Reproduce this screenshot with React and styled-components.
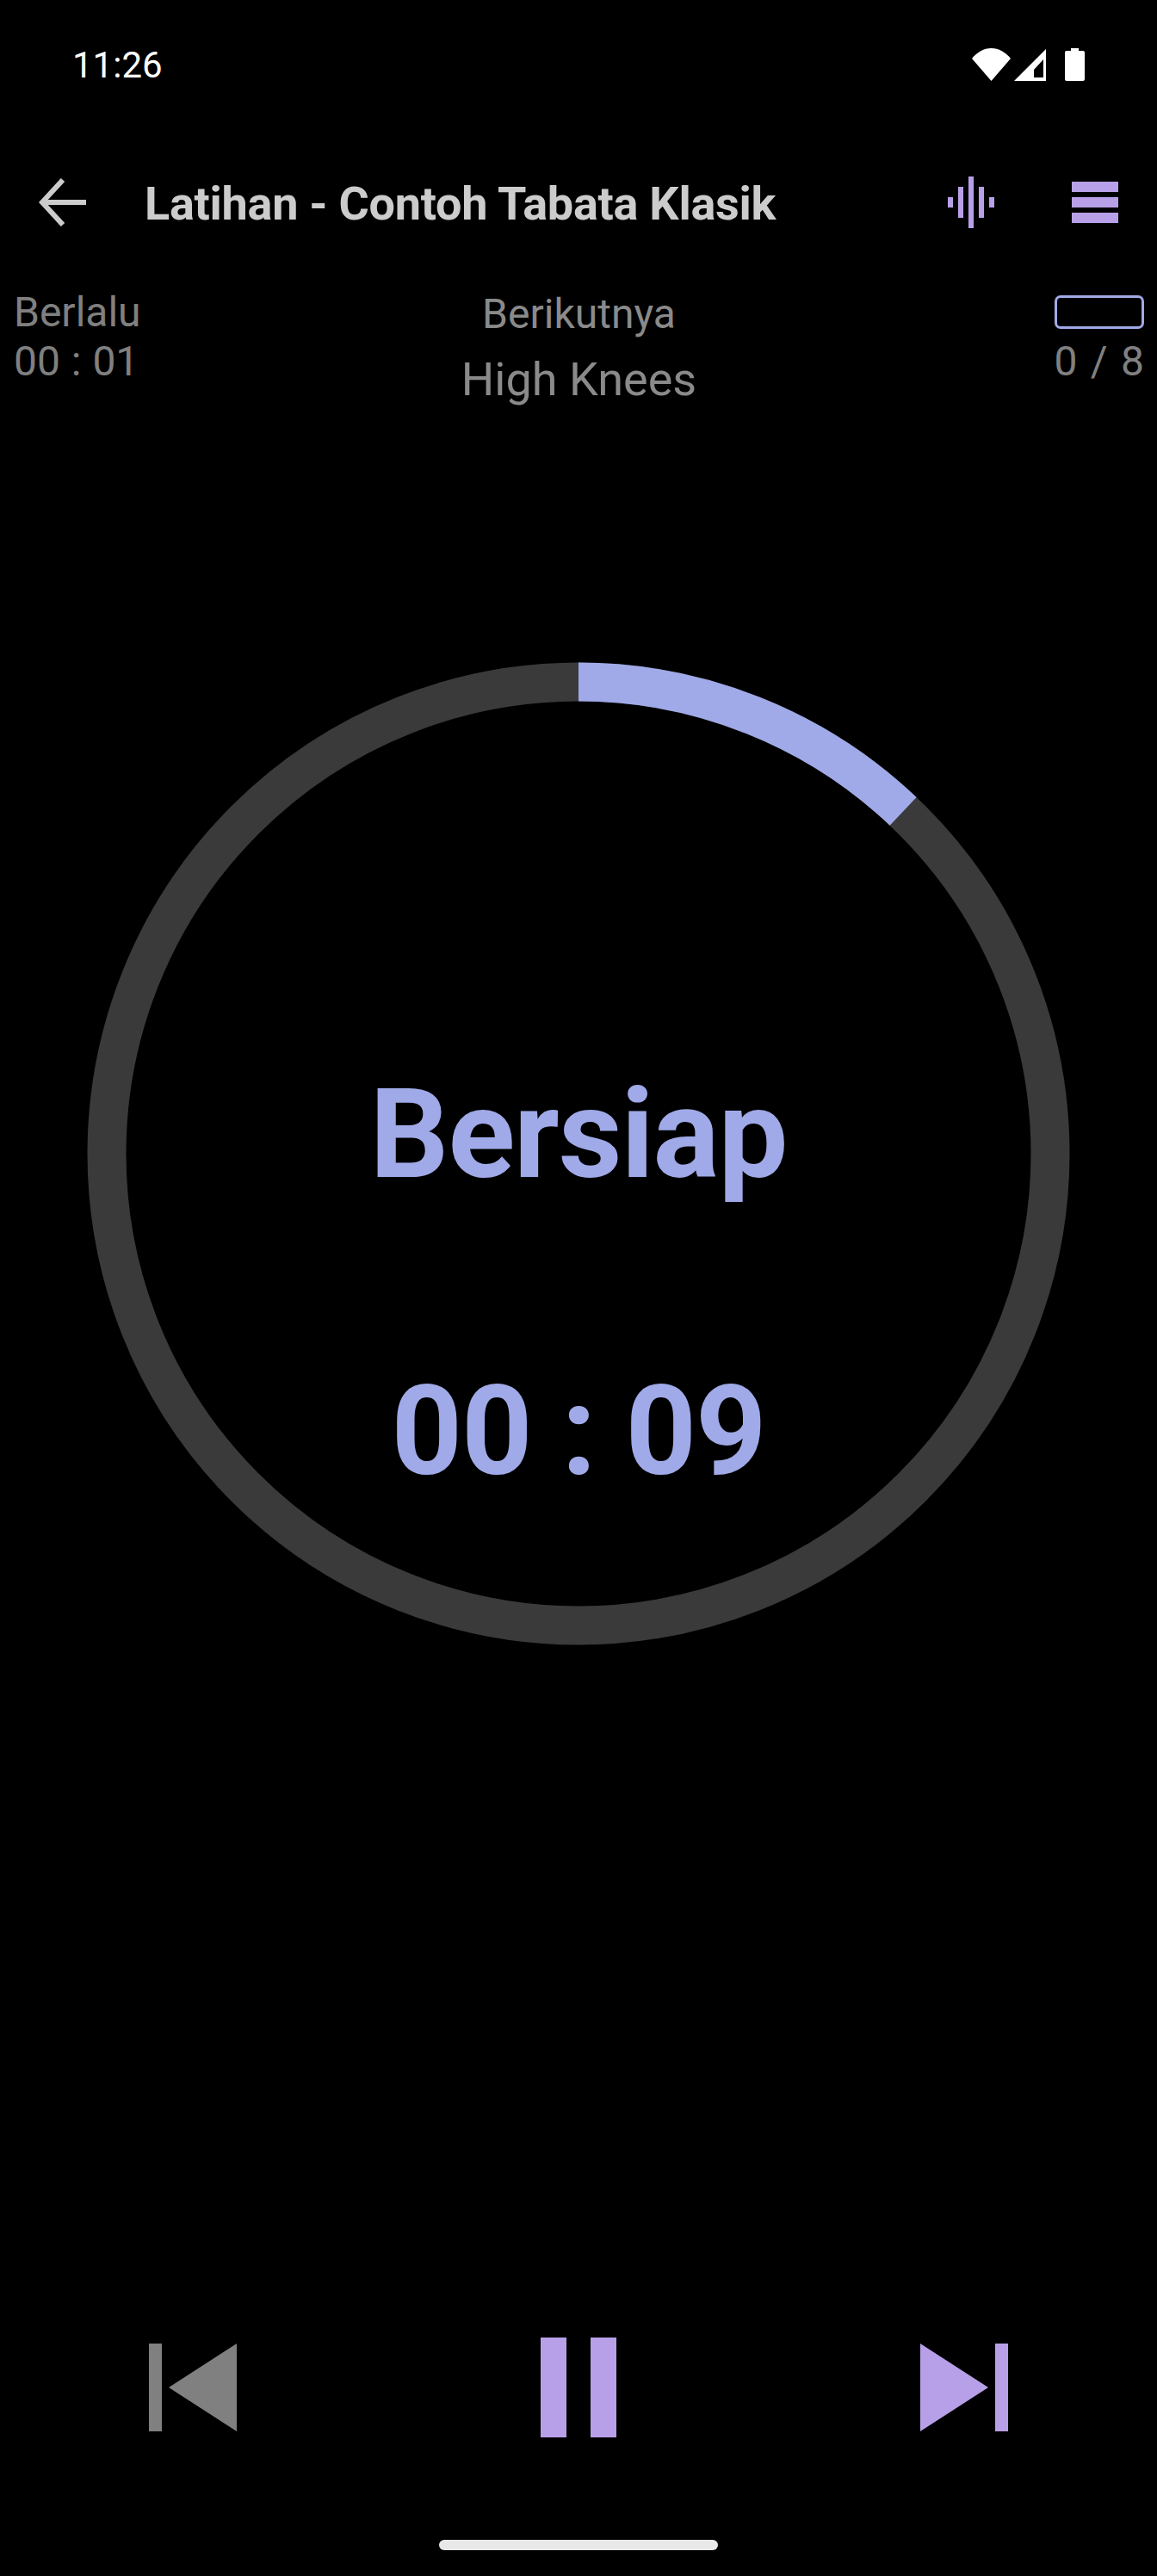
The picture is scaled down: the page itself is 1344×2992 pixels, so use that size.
import React from 'react'
import styled, { createGlobalStyle } from 'styled-components'

const indigo = '#a0aae8'
const purple = '#b8a0e8'
const grey = '#808080'

const GlobalStyle = createGlobalStyle`
    html, body {
        margin: 0;
        padding: 0;
        background: #000;
    }
    * {
        box-sizing: border-box;
    }
`
const Page = styled.div`
    width: 1344px;
    height: 2992px;
    display: flex;
    flex-direction: column;
    background: #000;
    font-family: Roboto, sans-serif;
    overflow: hidden;
`
const StatusBar = styled.div`
    height: 150px;
    display: flex;
    align-items: center;
    justify-content: space-between;
    padding: 0 84px;
`
const Clock = styled.span`
    padding-top: 2px;
    font-size: 42px;
    line-height: 50px;
    color: #fff;
`
const StatusIcons = styled.div`
    display: flex;
    align-items: center;
`
const Toolbar = styled.div`
    height: 170px;
    display: flex;
    align-items: center;
    padding: 0 45px;
`
const Title = styled.h1`
    flex: 1;
    margin: 3px 0 0 68px;
    font-size: 54px;
    line-height: 64px;
    font-weight: 700;
    letter-spacing: -0.27px;
    color: #ccc;
`
const ToolbarIcons = styled.div`
    display: flex;
    align-items: center;
    gap: 90px;
`
const InfoRow = styled.div`
    height: 448px;
    display: grid;
    grid-template-columns: 1fr auto 1fr;
    align-items: start;
    padding: 14px 15px 0 16px;
`
const Elapsed = styled.div`
    font-size: 48px;
    line-height: 57px;
    word-spacing: 1px;
    color: ${grey};
`
const NextUp = styled.div`
    padding-top: 3px;
    display: flex;
    flex-direction: column;
    align-items: center;
    color: #8a8a8a;
`
const NextLabel = styled.span`
    font-size: 48px;
    line-height: 56px;
`
const NextName = styled.span`
    font-size: 54px;
    line-height: 64px;
    margin-top: 16px;
`
const Rounds = styled.div`
    justify-self: end;
    display: flex;
    flex-direction: column;
    align-items: flex-end;
    padding-top: 9px;
    font-size: 48px;
    line-height: 56px;
    word-spacing: 3.5px;
    color: ${grey};
`
const RoundBar = styled.div`
    width: 104px;
    height: 39px;
    border: 3px solid ${indigo};
    border-radius: 7px;
    margin-bottom: 10px;
`
const RingArea = styled.div`
    position: relative;
    width: 1144px;
    height: 1144px;
    margin: 0 auto;
`
const RingOverlay = styled.div`
    position: absolute;
    inset: 0;
    display: flex;
    flex-direction: column;
    align-items: center;
    gap: 177px;
    padding-top: 466px;
    color: ${indigo};
    font-size: 144px;
    line-height: 168px;
    font-weight: 700;
    letter-spacing: -1.1px;
`
const Controls = styled.div`
    margin-top: auto;
    display: flex;
    align-items: center;
    justify-content: space-between;
    padding: 0 173px;
`
const HomeBar = styled.div`
    width: 324px;
    height: 12px;
    margin: 119px auto 30px;
    border-radius: 6px;
    background: #e8e8e8;
`
const Glyph = styled.svg`
    display: block;
    flex-shrink: 0;
    fill: ${props => props.$color || 'currentColor'};
    margin-left: ${props => props.$gap || 0}px;
`

const Wifi = () => (
  <Glyph width="45" height="38" viewBox="0 0 45 38" $color="#fff">
    <path d="M22.5 38L0 12C6 4.5 14 0 22.5 0S39 4.5 45 12z" />
  </Glyph>
)
const Signal = () => (
  <Glyph width="37" height="37" viewBox="0 0 37 37" $color="#fff" $gap={4}>
    <path fillRule="evenodd" d="M37 0v37H0zM34 12L23 24v9h11z" />
  </Glyph>
)
const Battery = () => (
  <Glyph width="23" height="38" viewBox="0 0 23 38" $color="#fff" $gap={22}>
    <path d="M7 0h9v3h5a2 2 0 0 1 2 2v31a2 2 0 0 1-2 2H2a2 2 0 0 1-2-2V5a2 2 0 0 1 2-2h5z" />
  </Glyph>
)
const BackArrow = () => (
  <Glyph width="55" height="56" viewBox="0 0 55 56" $color="none">
    <path d="M55 28H4M28 2L4 28l24 26" stroke="#ccc" strokeWidth="6" />
  </Glyph>
)
const WaveIcon = () => (
  <Glyph width="54" height="60" viewBox="0 0 54 60" $color={purple}>
    <path d="M0 24h6v12H0zM12 12h6v36h-6zM24 0h6v60h-6zM36 12h6v36h-6zM48 24h6v12h-6z" />
  </Glyph>
)
const MenuIcon = () => (
  <Glyph width="54" height="48" viewBox="0 0 54 48" $color={purple}>
    <path d="M0 0h54v12H0zM0 18h54v12H0zM0 36h54v12H0z" />
  </Glyph>
)
const PrevIcon = () => (
  <Glyph width="102" height="102" viewBox="0 0 102 102" $color={grey}>
    <path d="M0 0h15v102H0zM23 51L102 0v102z" />
  </Glyph>
)
const PauseIcon = () => (
  <Glyph width="88" height="116" viewBox="0 0 88 116" $color={purple}>
    <path d="M0 0h30v116H0zM58 0h30v116H58z" />
  </Glyph>
)
const NextIcon = () => (
  <Glyph width="102" height="102" viewBox="0 0 102 102" $color={purple}>
    <path d="M0 0l79 51L0 102zM87 0h15v102H87z" />
  </Glyph>
)

const Ring = ({ progress }) => {
  const radius = 548
  const length = 2 * Math.PI * radius
  return (
    <svg width="1144" height="1144" viewBox="0 0 1144 1144" style={{ display: 'block' }}>
      <circle cx="572" cy="572" r={radius} fill="none" stroke="#3a3a3a" strokeWidth="45" />
      <circle
        cx="572"
        cy="572"
        r={radius}
        fill="none"
        stroke={indigo}
        strokeWidth="45"
        strokeDasharray={`${length * progress} ${length}`}
        transform="rotate(-90 572 572)"
      />
    </svg>
  )
}

const App = () => {
  return (
    <Page>
      <GlobalStyle />
      <StatusBar>
        <Clock>11:26</Clock>
        <StatusIcons>
          <Wifi />
          <Signal />
          <Battery />
        </StatusIcons>
      </StatusBar>
      <Toolbar>
        <BackArrow />
        <Title>Latihan - Contoh Tabata Klasik</Title>
        <ToolbarIcons>
          <WaveIcon />
          <MenuIcon />
        </ToolbarIcons>
      </Toolbar>
      <InfoRow>
        <Elapsed>
          Berlalu
          <br />
          00 : 01
        </Elapsed>
        <NextUp>
          <NextLabel>Berikutnya</NextLabel>
          <NextName>High Knees</NextName>
        </NextUp>
        <Rounds>
          <RoundBar />
          0 / 8
        </Rounds>
      </InfoRow>
      <RingArea>
        <Ring progress={0.1208} />
        <RingOverlay>
          <span>Bersiap</span>
          <span>00 : 09</span>
        </RingOverlay>
      </RingArea>
      <Controls>
        <PrevIcon />
        <PauseIcon />
        <NextIcon />
      </Controls>
      <HomeBar />
    </Page>
  )
}

export default App
